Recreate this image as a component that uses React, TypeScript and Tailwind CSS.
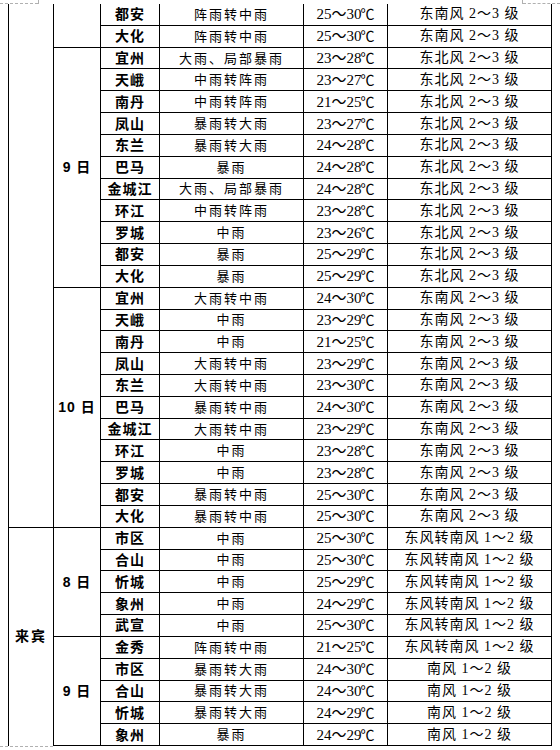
import React from "react";

type Row = { city: string; wx: string; t: string; wind: string };

const r = (city: string, wx: string, t: string, wind: string): Row => ({ city, wx, t, wind });

const SE = "东南风 2～3 级";
const NE = "东北风 2～3 级";
const EtoS = "东风转南风 1～2 级";
const S = "南风 1～2 级";

type DateGroup = { date: string; span: string; rows: Row[] };
type CityGroup = { name: string; span: string; last: boolean; dates: DateGroup[] };

const groups: CityGroup[] = [
  {
    name: "",
    span: "row-span-24",
    last: false,
    dates: [
      {
        date: "",
        span: "row-span-2",
        rows: [r("都安", "阵雨转中雨", "25～30", SE), r("大化", "阵雨转中雨", "25～30", SE)],
      },
      {
        date: "9 日",
        span: "row-span-11",
        rows: [
          r("宜州", "大雨、局部暴雨", "23～28", NE),
          r("天峨", "中雨转阵雨", "23～27", NE),
          r("南丹", "中雨转阵雨", "21～25", NE),
          r("凤山", "暴雨转大雨", "23～27", NE),
          r("东兰", "暴雨转大雨", "24～28", NE),
          r("巴马", "暴雨", "24～28", NE),
          r("金城江", "大雨、局部暴雨", "24～28", NE),
          r("环江", "中雨转阵雨", "23～28", NE),
          r("罗城", "中雨", "23～26", NE),
          r("都安", "暴雨", "25～29", NE),
          r("大化", "暴雨", "25～29", NE),
        ],
      },
      {
        date: "10 日",
        span: "row-span-11",
        rows: [
          r("宜州", "大雨转中雨", "24～30", SE),
          r("天峨", "中雨", "23～29", SE),
          r("南丹", "中雨", "21～25", SE),
          r("凤山", "大雨转中雨", "23～29", SE),
          r("东兰", "大雨转中雨", "23～30", SE),
          r("巴马", "暴雨转中雨", "24～30", SE),
          r("金城江", "大雨转中雨", "23～29", SE),
          r("环江", "中雨", "23～28", SE),
          r("罗城", "中雨", "23～28", SE),
          r("都安", "暴雨转中雨", "25～30", SE),
          r("大化", "暴雨转中雨", "25～30", SE),
        ],
      },
    ],
  },
  {
    name: "来宾",
    span: "row-span-10",
    last: true,
    dates: [
      {
        date: "8 日",
        span: "row-span-5",
        rows: [
          r("市区", "中雨", "25～30", EtoS),
          r("合山", "中雨", "25～30", EtoS),
          r("忻城", "中雨", "25～29", EtoS),
          r("象州", "中雨", "24～29", EtoS),
          r("武宣", "中雨", "25～30", EtoS),
        ],
      },
      {
        date: "9 日",
        span: "row-span-5",
        rows: [
          r("金秀", "阵雨转中雨", "21～25", EtoS),
          r("市区", "暴雨转大雨", "24～30", S),
          r("合山", "暴雨转大雨", "24～30", S),
          r("忻城", "暴雨转大雨", "24～29", S),
          r("象州", "暴雨", "24～29", S),
        ],
      },
    ],
  },
];

const cell = "flex items-center justify-center border-r border-b border-black leading-none whitespace-nowrap";
const boldFont = "[font-family:'Liberation_Sans','Noto_Sans_CJK_SC',sans-serif] font-bold text-[14px] text-black";
const bodyFont = "[font-family:'Liberation_Serif','Noto_Sans_CJK_SC',serif] text-black";

export default function App() {
  const cells: React.ReactNode[] = [];
  groups.forEach((g, gi) => {
    cells.push(
      <div
        key={`g${gi}`}
        className={`${g.span} flex items-center justify-center border-r border-black ${g.last ? "" : "border-b"} ${boldFont} tracking-[2px]`}
      >
        {g.name}
      </div>
    );
    g.dates.forEach((d, di) => {
      cells.push(
        <div key={`d${gi}-${di}`} className={`${d.span} ${cell} ${boldFont} tracking-[1px]`}>
          {d.date}
        </div>
      );
      d.rows.forEach((row, ri) => {
        const k = `${gi}-${di}-${ri}`;
        cells.push(
          <div key={`c${k}`} className={`${cell} ${boldFont} tracking-[1px]`}>
            {row.city}
          </div>,
          <div key={`w${k}`} className={`${cell} ${bodyFont} text-[13px] tracking-[2px]`}>
            {row.wx}
          </div>,
          <div key={`t${k}`} className={`${cell} ${bodyFont} text-[15px]`}>
            <span>
              {row.t}
              <span className="[font-family:'Noto_Sans_CJK_SC',sans-serif] text-[14px] -ml-px">℃</span>
            </span>
          </div>,
          <div key={`n${k}`} className={`${cell} ${bodyFont} text-[14px] tracking-[1px]`}>
            {row.wind}
          </div>
        );
      });
    });
  });

  return (
    <div className="flex flex-col w-[560px] h-[750px] bg-white overflow-hidden">
      {/* top page-margin corner marks */}
      <div className="flex h-[4px] shrink-0">
        <div className="w-[38px] h-[4px] border-b border-dashed border-[#b0b0b0]" />
        <div className="w-px h-[4px] bg-[#b0b0b0]" />
        <div className="flex-1" />
        <div className="w-px h-[4px] bg-[#b0b0b0]" />
        <div className="w-[37px] h-[4px] border-b border-dashed border-[#b0b0b0]" />
      </div>
      <div className="ml-2 grid w-[544px] h-[742px] shrink-0 grid-cols-[45px_47px_59px_144px_84px_164px] grid-rows-34 border-l border-black">
        {cells}
      </div>
      {/* bottom page-margin mark */}
      <div className="w-[53px] border-t border-dashed border-[#b0b0b0]" />
    </div>
  );
}
